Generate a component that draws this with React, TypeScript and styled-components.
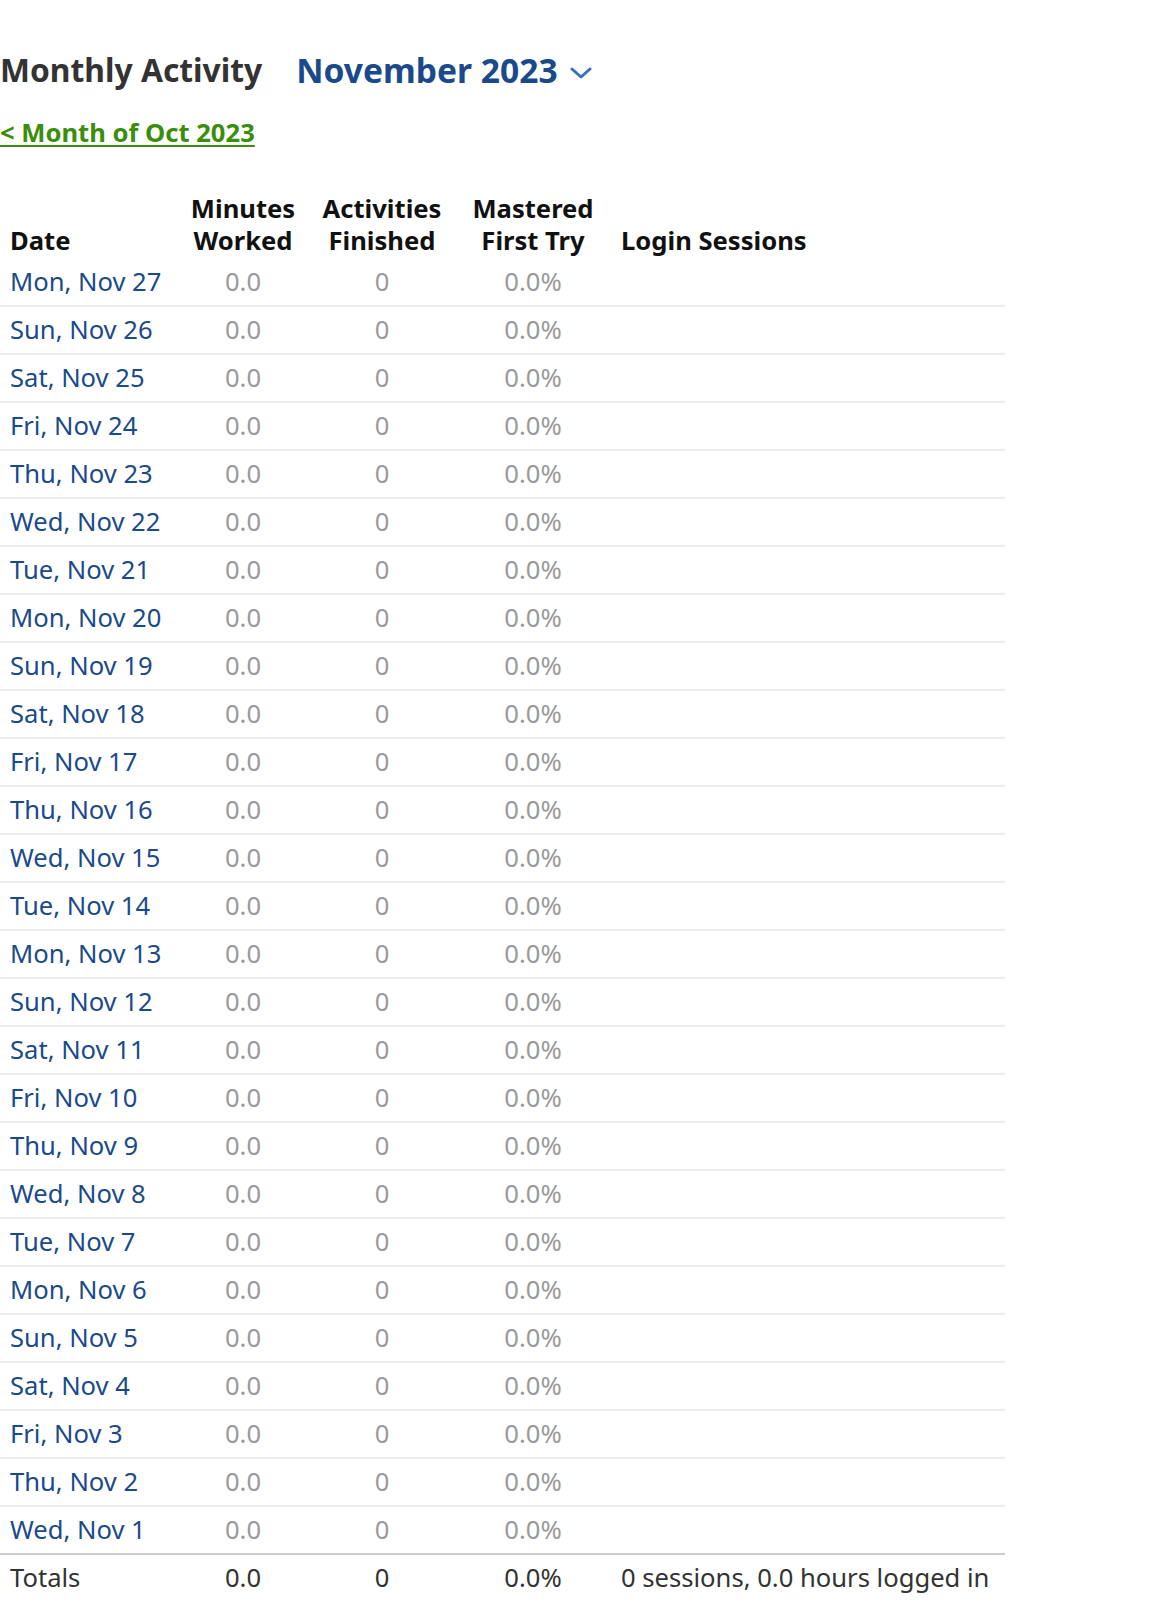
import React from "react";
import styled, { createGlobalStyle } from "styled-components";

const GlobalStyle = createGlobalStyle`
  html, body {
    margin: 0;
    padding: 0;
    background: #ffffff;
  }
  body {
    font-family: "Noto Sans", "Open Sans", sans-serif;
    color: #333333;
  }
`;

const Page = styled.div`
  padding-top: 50px;
  width: 1005px;
`;

const TitleRow = styled.div`
  display: flex;
  align-items: center;
  gap: 34px;
  height: 40px;
`;

const Title = styled.h2`
  margin: 0;
  font-size: 31.8px;
  line-height: 40px;
  font-weight: 700;
  color: #333333;
`;

const MonthPicker = styled.button`
  display: flex;
  align-items: center;
  gap: 12px;
  padding: 0;
  border: none;
  background: none;
  font-family: inherit;
  font-size: 33.6px;
  line-height: 40px;
  font-weight: 700;
  color: #1b4a8c;
  cursor: pointer;
`;

const Chevron = styled.svg`
  width: 22px;
  height: 12px;
  margin-top: 6px;
`;

const PrevLink = styled.a`
  display: inline-block;
  margin-top: 27px;
  font-size: 25.6px;
  line-height: 31px;
  font-weight: 700;
  color: #3a8e0c;
  text-decoration: underline;
  text-decoration-thickness: 2px;
  text-underline-offset: 3px;
`;

const Table = styled.table`
  margin-top: 45px;
  width: 1005px;
  table-layout: fixed;
  border-collapse: separate;
  border-spacing: 0;
  font-size: 25.6px;
`;

const HeadCell = styled.th<{ $align?: "left" | "center"; $pad?: number }>`
  text-align: ${(p) => p.$align ?? "center"};
  vertical-align: bottom;
  font-weight: 700;
  line-height: 32px;
  color: #111111;
  padding: 0 10px 2px ${(p) => p.$pad ?? 10}px;
  white-space: nowrap;
`;

const Row = styled.tr`
  &:last-child td {
    border-bottom: none;
  }
`;

const Cell = styled.td<{ $align?: "left" | "center"; $tone?: "link" | "muted" | "total"; $pad?: number }>`
  text-align: ${(p) => p.$align ?? "center"};
  line-height: 30px;
  padding: 8px 10px 8px ${(p) => p.$pad ?? 10}px;
  border-bottom: 2px solid #ececec;
  white-space: nowrap;
  color: ${(p) =>
    p.$tone === "link" ? "#1b4a8c" : p.$tone === "total" ? "#333333" : "#9a9a9a"};
`;

const TotalCell = styled(Cell)`
  border-bottom: none;
  border-top: 2px solid #cccccc;
`;

const DateLink = styled.a`
  color: #1b4a8c;
  text-decoration: none;
`;

const days = ["Wed", "Thu", "Fri", "Sat", "Sun", "Mon", "Tue"];
const rows = Array.from({ length: 27 }, (_, i) => {
  const d = 27 - i;
  return `${days[(d - 1) % 7]}, Nov ${d}`;
});

export default function App() {
  return (
    <>
      <GlobalStyle />
      <Page>
        <TitleRow>
          <Title>Monthly Activity</Title>
          <MonthPicker>
            November 2023
            <Chevron viewBox="0 0 22 12" fill="none">
              <path
                d="M2 2 L11 10 L20 2"
                stroke="#3a6fbf"
                strokeWidth="3"
                strokeLinecap="round"
                strokeLinejoin="round"
              />
            </Chevron>
          </MonthPicker>
        </TitleRow>
        <PrevLink href="#">&lt; Month of Oct 2023</PrevLink>
        <Table>
          <colgroup>
            <col style={{ width: 180 }} />
            <col style={{ width: 126 }} />
            <col style={{ width: 152 }} />
            <col style={{ width: 150 }} />
            <col />
          </colgroup>
          <thead>
            <tr>
              <HeadCell $align="left">Date</HeadCell>
              <HeadCell>
                Minutes
                <br />
                Worked
              </HeadCell>
              <HeadCell>
                Activities
                <br />
                Finished
              </HeadCell>
              <HeadCell>
                Mastered
                <br />
                First Try
              </HeadCell>
              <HeadCell $align="left" $pad={13}>
                Login Sessions
              </HeadCell>
            </tr>
          </thead>
          <tbody>
            {rows.map((label) => (
              <Row key={label}>
                <Cell $align="left" $tone="link">
                  <DateLink href="#">{label}</DateLink>
                </Cell>
                <Cell $tone="muted">0.0</Cell>
                <Cell $tone="muted">0</Cell>
                <Cell $tone="muted">0.0%</Cell>
                <Cell $align="left" $pad={13}></Cell>
              </Row>
            ))}
          </tbody>
          <tfoot>
            <tr>
              <TotalCell $align="left" $tone="total">Totals</TotalCell>
              <TotalCell $tone="total">0.0</TotalCell>
              <TotalCell $tone="total">0</TotalCell>
              <TotalCell $tone="total">0.0%</TotalCell>
              <TotalCell $align="left" $tone="total" $pad={13}>
                0 sessions, 0.0 hours logged in
              </TotalCell>
            </tr>
          </tfoot>
        </Table>
      </Page>
    </>
  );
}
